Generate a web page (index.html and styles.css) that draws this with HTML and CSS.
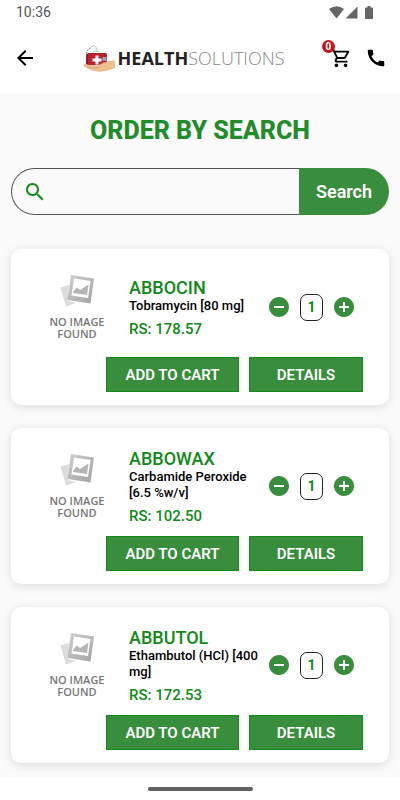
FILE: index.html
```
<!DOCTYPE html>
<html lang="en">

<head>
    <meta charset="UTF-8">
    <meta name="viewport" content="width=device-width, initial-scale=1.0">
    <title>Health Solutions</title>
    <link rel="stylesheet" href="styles.css">
</head>

<body>

    <!-- shared icons -->
    <svg class="sprite" aria-hidden="true">
        <linearGradient id="frame" x1="0" y1="0" x2="1" y2="1">
            <stop offset="0" stop-color="#cfcfcf" />
            <stop offset="1" stop-color="#a3a3a3" />
        </linearGradient>
        <symbol id="no-image" viewBox="0 0 34 34">
            <path fill="#dcdcdc" d="M0.5 13.5 9 11 8 27 16 29 6 32.5Z" />
            <path fill="url(#frame)" fill-rule="evenodd" d="M11 1 34 4.500 30.500 29.500 7.500 26ZM14 4.500 11.500 21.500 28 24 30.500 7Z" />
            <path fill="#b5b5b5" d="M13.500 17 17 13.500 20 16 28.500 10.500 27 21 13 19Z" />
        </symbol>
        <symbol id="minus" viewBox="0 0 24 24">
            <path d="M12 2C6.480 2 2 6.480 2 12s4.480 10 10 10 10-4.480 10-10S17.520 2 12 2zm5 11H7v-2h10v2z" />
        </symbol>
        <symbol id="plus" viewBox="0 0 24 24">
            <path d="M12 2C6.480 2 2 6.480 2 12s4.480 10 10 10 10-4.480 10-10S17.520 2 12 2zm5 11h-4v4h-2v-4H7v-2h4V7h2v4h4v2z" />
        </symbol>
    </svg>

    <div class="status">
        <span>10:36</span>
        <div class="status-icons">
            <svg width="15" height="13" viewBox="0 0 15 13"><path d="M0 3Q7.500-2.500 15 3L7.500 12.500Z" /></svg>
            <svg width="13" height="13" viewBox="0 0 13 13"><path d="M12.500 0.500V12.500H0.500Z" /></svg>
            <svg class="battery" width="8" height="13" viewBox="0 0 8 13"><path d="M2.500 0h3v1.500H7q1 0 1 1V12q0 1-1 1H1q-1 0-1-1V2.500q0-1 1-1h1.500Z" /></svg>
        </div>
    </div>

    <header>
        <button class="icon-btn" aria-label="Back">
            <svg width="24" height="24" viewBox="0 0 24 24"><path d="M20 11H7.830l5.590-5.590L12 4l-8 8 8 8 1.410-1.410L7.830 13H20v-2z" /></svg>
        </button>
        <a class="logo" href="#">
            <svg width="32" height="28" viewBox="0 0 32 28">
                <path fill="none" stroke="#888" stroke-dasharray="2 1" d="M3.500 13C3 7 5 5 8 3.500L10.500 1" />
                <path fill="none" stroke="#ccc" d="M10 1Q14 2 14 8M9 10Q10 6 14 7Q16 8 16 10" />
                <path fill="#b8232f" d="M5 9H22Q24 9 24 11V21H4.500Q3 21 3 19L4 10Z" />
                <path fill="#8c1a25" d="M3.500 10H5V21H4Q3 20 3 18ZM21 9H22V21H21Z" />
                <path fill="#fff" d="M12.500 11.500h3v3h3v3h-3v3h-3v-3h-3v-3h3Z" />
                <path fill="#9ca7ad" d="M19.500 13h4v4h-4Z" />
                <path fill="#efc08f" stroke="#d9a06c" stroke-width=".5" d="M1 20.500Q4 20 7 21.500L14 22 20 19Q26 16.500 31.500 17V24Q25 26 20 27 12 28.500 1.500 22.500Z" />
                <path fill="none" stroke="#d9a06c" stroke-width=".7" d="M4 22.500Q10 25.500 18 23" />
            </svg>
            <span><b>HEALTH</b>SOLUTIONS</span>
        </a>
        <button class="icon-btn cart" aria-label="Cart">
            <svg width="22" height="22" viewBox="0 0 24 24"><path d="M15.550 13c.75 0 1.410-.41 1.750-1.030l3.580-6.490c.37-.66-.11-1.480-.87-1.480H5.210l-.94-2H1v2h2l3.600 7.590-1.350 2.440C4.520 15.370 5.480 17 7 17h12v-2H7l1.100-2h7.450zM6.160 6h12.150l-2.760 5H8.530L6.160 6zM7 18c-1.100 0-1.990.9-1.990 2S5.900 22 7 22s2-.9 2-2-.9-2-2-2zm10 0c-1.100 0-1.990.9-1.990 2s.89 2 1.990 2 2-.9 2-2-.9-2-2-2z" /></svg>
            <span class="badge">0</span>
        </button>
        <button class="icon-btn" aria-label="Call">
            <svg width="22" height="22" viewBox="0 0 24 24"><path d="M20.010 15.380c-1.230 0-2.420-.2-3.530-.56-.35-.12-.74-.03-1.010.24l-1.570 1.970c-2.830-1.350-5.480-3.900-6.890-6.830l1.950-1.660c.27-.28.35-.67.24-1.020-.37-1.110-.56-2.300-.56-3.530 0-.54-.45-.99-.99-.99H4.190C3.650 3 3 3.240 3 3.990 3 13.280 10.730 21 20.010 21c.71 0 .99-.63.99-1.180v-3.450c0-.54-.45-.99-.99-.99z" /></svg>
        </button>
    </header>

    <main>
        <h1>ORDER BY SEARCH</h1>

        <form class="search" onsubmit="return false">
            <label for="search">
                <svg width="24" height="24" viewBox="0 0 24 24"><path d="M15.500 14h-.79l-.28-.27C15.410 12.590 16 11.110 16 9.500 16 5.910 13.090 3 9.500 3S3 5.910 3 9.500 5.910 16 9.500 16c1.610 0 3.090-.59 4.230-1.570l.27.28v.79l5 4.990L20.490 19l-4.990-5zm-6 0C7.010 14 5 11.990 5 9.500S7.010 5 9.500 5 14 7.010 14 9.500 11.990 14 9.500 14z" /></svg>
            </label>
            <input type="text" id="search" aria-label="Search">
            <button>Search</button>
        </form>

        <div class="card">
            <div class="info">
                <div class="photo">
                    <svg width="34" height="34"><use href="#no-image" /></svg>
                    <span>NO IMAGE FOUND</span>
                </div>
                <div class="details">
                    <h2>ABBOCIN</h2>
                    <p>Tobramycin [80 mg]</p>
                    <p class="price">RS: 178.57</p>
                </div>
                <div class="quantity">
                    <button aria-label="Less" onclick="changeQuantity(this, -1)"><svg width="24" height="24"><use href="#minus" /></svg></button>
                    <input type="text" value="1" aria-label="Quantity">
                    <button aria-label="More" onclick="changeQuantity(this, 1)"><svg width="24" height="24"><use href="#plus" /></svg></button>
                </div>
            </div>
            <div class="actions">
                <button class="add">ADD TO CART</button>
                <button class="more">DETAILS</button>
            </div>
        </div>

        <div class="card">
            <div class="info">
                <div class="photo">
                    <svg width="34" height="34"><use href="#no-image" /></svg>
                    <span>NO IMAGE FOUND</span>
                </div>
                <div class="details">
                    <h2>ABBOWAX</h2>
                    <p>Carbamide Peroxide [6.5 %w/v]</p>
                    <p class="price">RS: 102.50</p>
                </div>
                <div class="quantity">
                    <button aria-label="Less" onclick="changeQuantity(this, -1)"><svg width="24" height="24"><use href="#minus" /></svg></button>
                    <input type="text" value="1" aria-label="Quantity">
                    <button aria-label="More" onclick="changeQuantity(this, 1)"><svg width="24" height="24"><use href="#plus" /></svg></button>
                </div>
            </div>
            <div class="actions">
                <button class="add">ADD TO CART</button>
                <button class="more">DETAILS</button>
            </div>
        </div>

        <div class="card">
            <div class="info">
                <div class="photo">
                    <svg width="34" height="34"><use href="#no-image" /></svg>
                    <span>NO IMAGE FOUND</span>
                </div>
                <div class="details">
                    <h2>ABBUTOL</h2>
                    <p>Ethambutol (HCl) [400 mg]</p>
                    <p class="price">RS: 172.53</p>
                </div>
                <div class="quantity">
                    <button aria-label="Less" onclick="changeQuantity(this, -1)"><svg width="24" height="24"><use href="#minus" /></svg></button>
                    <input type="text" value="1" aria-label="Quantity">
                    <button aria-label="More" onclick="changeQuantity(this, 1)"><svg width="24" height="24"><use href="#plus" /></svg></button>
                </div>
            </div>
            <div class="actions">
                <button class="add">ADD TO CART</button>
                <button class="more">DETAILS</button>
            </div>
        </div>
    </main>

    <div class="home-bar"></div>

    <script>
        function changeQuantity(button, step) {
            const input = button.parentElement.querySelector('input');
            input.value = Math.max(1, Number(input.value) + step);
        }
    </script>

</body>

</html>
```
FILE: styles.css
```
* {
    box-sizing: border-box;
}

body {
    display: flex;
    flex-direction: column;
    min-height: 100vh;
    margin: 0;
    background-color: #fff;
    font-family: Roboto, sans-serif;
}

h1, h2, p {
    margin: 0;
}

button, input {
    padding: 0;
    border: 0;
    font-family: Roboto, sans-serif;
}

button {
    cursor: pointer;
}

svg {
    display: block;
}

.sprite {
    position: absolute;
    width: 0;
    height: 0;
}

.status {
    display: flex;
    justify-content: space-between;
    align-items: center;
    height: 24px;
    padding: 0 27px 0 16px;
    color: #555;
    font-size: 14px;
}

.status-icons {
    display: flex;
    gap: 1px;
    fill: #666;
}

.battery {
    margin-left: 6px;
}

header {
    display: flex;
    align-items: center;
    height: 69px;
    padding: 0 13px 2px;
}

.icon-btn {
    position: relative;
    background: none;
}

.logo {
    display: flex;
    align-items: center;
    gap: 3px;
    margin: 0 auto;
    color: #888;
    font-family: "Open Sans", sans-serif;
    font-size: 18px;
    font-weight: 300;
    text-decoration: none;
}

.logo b {
    color: #222;
    font-weight: 700;
}

.cart {
    margin-right: 13px;
}

.badge {
    position: absolute;
    top: -7px;
    left: -8px;
    width: 13px;
    height: 13px;
    border-radius: 50%;
    background-color: #c4161c;
    color: #fff;
    font-size: 10px;
    font-weight: 700;
    line-height: 13px;
    text-align: center;
}

main {
    flex: 1;
    padding: 22px 11px 14px;
    background-color: #fafafa;
}

h1 {
    color: #228b2a;
    font-size: 25px;
    font-weight: 800;
    line-height: 32px;
    text-align: center;
}

.search {
    display: flex;
    height: 47px;
    margin: 21px 0 34px;
}

.search label {
    display: flex;
    align-items: center;
    padding-left: 11px;
    border: 1px solid #555;
    border-right: 0;
    border-radius: 24px 0 0 24px;
    fill: #118a18;
}

.search input {
    flex: 1;
    min-width: 0;
    padding: 0 8px;
    border: 1px solid #555;
    border-width: 1px 0;
    background: none;
    font-size: 16px;
    outline: none;
}

.search button {
    width: 90px;
    border-radius: 0 24px 24px 0;
    background-color: #388e3c;
    color: #fff;
    font-size: 18px;
    font-weight: 600;
}

.card {
    padding: 9px 26px 13px 35px;
    border-radius: 10px;
    background-color: #fff;
    box-shadow: 0 2px 10px rgba(0, 0, 0, 0.12);
}

.card + .card {
    margin-top: 23px;
}

.info {
    display: flex;
    align-items: center;
    height: 98px;
    margin-bottom: 1px;
}

.photo {
    display: flex;
    flex-direction: column;
    align-items: center;
    gap: 8px;
    width: 62px;
    color: #777;
    font-family: "Open Sans", sans-serif;
    font-size: 11px;
    font-weight: 600;
    line-height: 12px;
    text-align: center;
}

.details {
    flex: 1;
    padding-left: 21px;
    font-size: 13px;
    font-weight: 500;
    line-height: 16px;
}

.details h2 {
    color: #118a18;
    font-size: 18px;
    font-weight: 500;
    line-height: 20px;
}

.details .price {
    margin-top: 7px;
    color: #118a18;
    font-size: 15px;
}

.quantity {
    display: flex;
    align-items: center;
    gap: 9px;
    margin-right: 7px;
}

.quantity button {
    background: none;
    fill: #388e3c;
}

.quantity input {
    width: 23px;
    height: 27px;
    border: 1px solid #222;
    border-radius: 7px;
    color: #118a18;
    font-size: 14px;
    font-weight: 700;
    text-align: center;
}

.actions {
    display: flex;
    justify-content: flex-end;
    gap: 10px;
}

.actions button {
    height: 35px;
    border: 1px solid #118a18;
    background-color: #388e3c;
    color: #fff;
    font-size: 15px;
    font-weight: 600;
}

.add {
    width: 133px;
}

.more {
    width: 114px;
}

.home-bar {
    display: flex;
    justify-content: center;
    align-items: center;
    height: 23px;
}

.home-bar::before {
    content: "";
    width: 105px;
    height: 4px;
    border-radius: 2px;
    background-color: #606060;
}
```
